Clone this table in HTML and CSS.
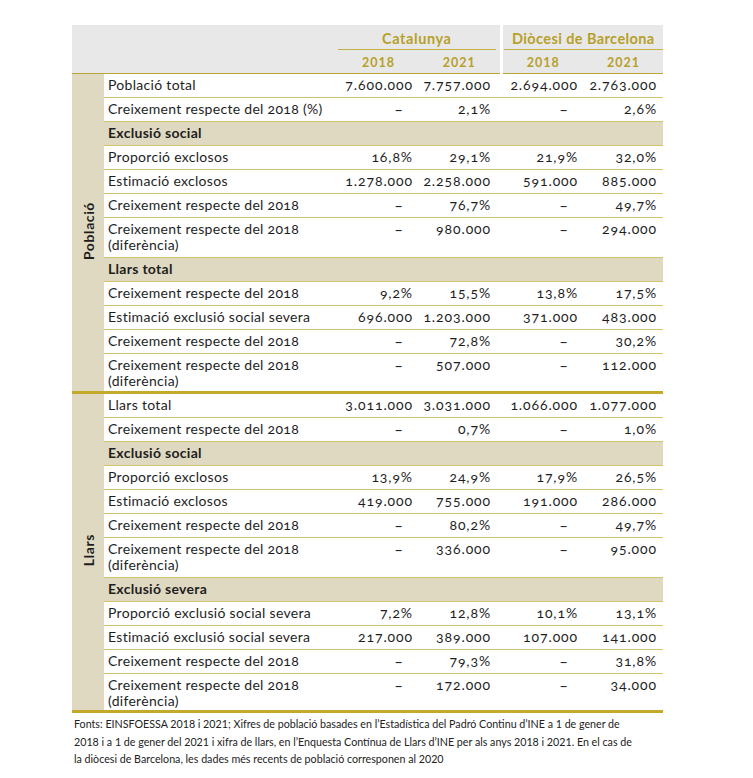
FILE: index.html
```
<!DOCTYPE html>
<html lang="ca">
<head>
<meta charset="utf-8">
<title>Població i llars</title>
<link rel="stylesheet" href="styles.css">
</head>
<body>
<div class="wrap">
<table class="tbl">
  <colgroup>
    <col class="c-side"><col class="c-label"><col class="c-n1"><col class="c-n2"><col class="c-n3"><col class="c-n4">
  </colgroup>
  <thead>
    <tr class="h1">
      <th class="blank" colspan="2" rowspan="2"></th>
      <th class="grp" colspan="2"><span>Catalunya</span></th>
      <th class="grp g2" colspan="2"><span>Diòcesi de Barcelona</span></th>
    </tr>
    <tr class="h2">
      <th class="yr">2018</th><th class="yr">2021</th><th class="yr g2">2018</th><th class="yr">2021</th>
    </tr>
  </thead>
  <tbody class="sec">
    <tr><th class="side" rowspan="12"><span>Població</span></th><td class="lb">Població total</td><td>7.600.000</td><td class="n2">7.757.000</td><td>2.694.000</td><td>2.763.000</td></tr>
    <tr><td class="lb">Creixement respecte del 2018 (%)</td><td class="d">–</td><td class="n2">2,1%</td><td class="d">–</td><td>2,6%</td></tr>
    <tr class="sub"><td class="lb">Exclusió social</td><td></td><td></td><td></td><td></td></tr>
    <tr><td class="lb">Proporció exclosos</td><td>16,8%</td><td class="n2">29,1%</td><td>21,9%</td><td>32,0%</td></tr>
    <tr><td class="lb">Estimació exclosos</td><td>1.278.000</td><td class="n2">2.258.000</td><td>591.000</td><td>885.000</td></tr>
    <tr><td class="lb">Creixement respecte del 2018</td><td class="d">–</td><td class="n2">76,7%</td><td class="d">–</td><td>49,7%</td></tr>
    <tr class="two"><td class="lb">Creixement respecte del 2018<br>(diferència)</td><td class="d">–</td><td class="n2">980.000</td><td class="d">–</td><td>294.000</td></tr>
    <tr class="sub"><td class="lb">Llars total</td><td></td><td></td><td></td><td></td></tr>
    <tr><td class="lb">Creixement respecte del 2018</td><td>9,2%</td><td class="n2">15,5%</td><td>13,8%</td><td>17,5%</td></tr>
    <tr><td class="lb">Estimació exclusió social severa</td><td>696.000</td><td class="n2">1.203.000</td><td>371.000</td><td>483.000</td></tr>
    <tr><td class="lb">Creixement respecte del 2018</td><td class="d">–</td><td class="n2">72,8%</td><td class="d">–</td><td>30,2%</td></tr>
    <tr class="two last"><td class="lb">Creixement respecte del 2018<br>(diferència)</td><td class="d">–</td><td class="n2">507.000</td><td class="d">–</td><td>112.000</td></tr>
  </tbody>
  <tbody class="sec">
    <tr><th class="side" rowspan="12"><span>Llars</span></th><td class="lb">Llars total</td><td>3.011.000</td><td class="n2">3.031.000</td><td>1.066.000</td><td>1.077.000</td></tr>
    <tr><td class="lb">Creixement respecte del 2018</td><td class="d">–</td><td class="n2">0,7%</td><td class="d">–</td><td>1,0%</td></tr>
    <tr class="sub"><td class="lb">Exclusió social</td><td></td><td></td><td></td><td></td></tr>
    <tr><td class="lb">Proporció exclosos</td><td>13,9%</td><td class="n2">24,9%</td><td>17,9%</td><td>26,5%</td></tr>
    <tr><td class="lb">Estimació exclosos</td><td>419.000</td><td class="n2">755.000</td><td>191.000</td><td>286.000</td></tr>
    <tr><td class="lb">Creixement respecte del 2018</td><td class="d">–</td><td class="n2">80,2%</td><td class="d">–</td><td>49,7%</td></tr>
    <tr class="two"><td class="lb">Creixement respecte del 2018<br>(diferència)</td><td class="d">–</td><td class="n2">336.000</td><td class="d">–</td><td>95.000</td></tr>
    <tr class="sub"><td class="lb">Exclusió severa</td><td></td><td></td><td></td><td></td></tr>
    <tr><td class="lb">Proporció exclusió social severa</td><td>7,2%</td><td class="n2">12,8%</td><td>10,1%</td><td>13,1%</td></tr>
    <tr><td class="lb">Estimació exclusió social severa</td><td>217.000</td><td class="n2">389.000</td><td>107.000</td><td>141.000</td></tr>
    <tr><td class="lb">Creixement respecte del 2018</td><td class="d">–</td><td class="n2">79,3%</td><td class="d">–</td><td>31,8%</td></tr>
    <tr class="two last end"><td class="lb">Creixement respecte del 2018<br>(diferència)</td><td class="d">–</td><td class="n2">172.000</td><td class="d">–</td><td>34.000</td></tr>
  </tbody>
</table>
<p class="note">Fonts: EINSFOESSA 2018 i 2021; Xifres de població basades en l’Estadística del Padró Continu d’INE a 1 de gener de<br>2018 i a 1 de gener del 2021 i xifra de llars, en l’Enquesta Contínua de Llars d’INE per als anys 2018 i 2021. En el cas de<br>la diòcesi de Barcelona, les dades més recents de població corresponen al 2020</p>
</div>
</body>
</html>
```
FILE: styles.css
```
html, body {
  margin: 0;
  padding: 0;
  background: #ffffff;
}
body {
  font-family: Lato, "Noto Sans", sans-serif;
  color: #1e1e1e;
}
.wrap {
  padding: 25px 0 0 72px;
}
.tbl {
  border-collapse: collapse;
  table-layout: fixed;
  width: 591px;
  font-size: 14px;
  font-variant-numeric: oldstyle-nums;
}
.c-side { width: 32px; }
.c-label { width: 234px; }
.c-n1 { width: 81px; }
.c-n2 { width: 82px; }
.c-n3 { width: 83px; }
.c-n4 { width: 79px; }

thead th {
  background: #e8e8e8;
  color: #b7a02a;
  font-weight: 700;
  padding: 0;
  font-variant-numeric: lining-nums;
}
.h1 th { height: 25px; }
.h2 th { height: 22px; }
.grp {
  vertical-align: bottom;
  font-size: 14.5px;
  letter-spacing: 0.6px;
}
.grp span {
  display: block;
  margin: 0 4px 0 0;
  padding-bottom: 2px;
  border-bottom: 1px solid #c6b04a;
}
.grp.g2 span { margin: 0 0 0 1px; letter-spacing: 0.4px; }
.g2 { border-left: 3px solid #ffffff; }
.yr {
  font-size: 12.5px;
  text-align: center;
  letter-spacing: 1px;
  padding-top: 1px;
}
.blank { background: #e8e8e8; }
thead tr.h2 th, thead .blank { border-bottom: 1px solid #b9a43a; }

.side {
  background: #e0d9c1;
  padding: 0;
  vertical-align: middle;
  text-align: center;
}
.side span {
  display: inline-block;
  writing-mode: vertical-rl;
  transform: rotate(180deg);
  font-weight: 700;
  font-size: 14px;
  letter-spacing: 0.6px;
}
.sec + .sec { border-top: 3px solid #c4aa2b; }

td {
  padding: 3px 6px 4px 0;
  line-height: 16px;
  height: 16px;
  text-align: right;
  vertical-align: top;
  border-bottom: 1px solid #d2c36c;
  white-space: nowrap;
  letter-spacing: 0.9px;
}
.sec tr.last td { padding-bottom: 2px; }
.sec tr.end td { padding-bottom: 1px; border-bottom: 0; }
td.n2 { padding-right: 10px; }
td.d { padding-right: 16px; letter-spacing: 0; font-size: 15px; }
td.lb {
  text-align: left;
  padding-left: 4px;
  padding-right: 0;
  letter-spacing: 0.3px;
}
tr.sub td {
  background: #e0d9c1;
  font-weight: 700;
}
.note {
  box-sizing: border-box;
  width: 591px;
  margin: 0;
  padding: 2px 0 0 2px;
  border-top: 3px solid #c4aa2b;
  font-size: 10.7px;
  line-height: 17.5px;
  color: #222;
  white-space: nowrap;
}
```
